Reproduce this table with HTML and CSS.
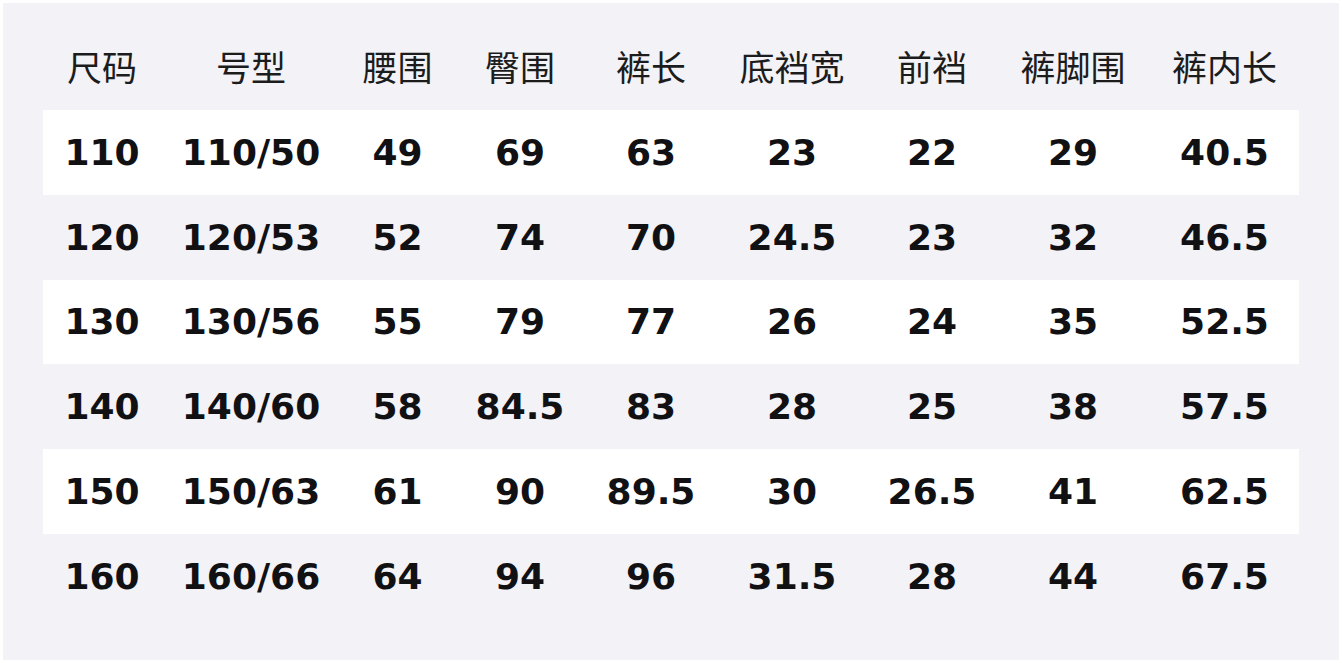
FILE: index.html
```html
<!DOCTYPE html>
<html lang="zh-CN">
<head>
<meta charset="utf-8">
<title>尺码表</title>
<link rel="stylesheet" href="styles.css">
</head>
<body>
<div class="panel">
  <div class="row head">
    <div>尺码</div><div>号型</div><div>腰围</div><div>臀围</div><div>裤长</div><div>底裆宽</div><div>前裆</div><div>裤脚围</div><div>裤内长</div>
  </div>
  <div class="row data alt">
    <div>110</div><div>110/50</div><div>49</div><div>69</div><div>63</div><div>23</div><div>22</div><div>29</div><div>40.5</div>
  </div>
  <div class="row data">
    <div>120</div><div>120/53</div><div>52</div><div>74</div><div>70</div><div>24.5</div><div>23</div><div>32</div><div>46.5</div>
  </div>
  <div class="row data alt">
    <div>130</div><div>130/56</div><div>55</div><div>79</div><div>77</div><div>26</div><div>24</div><div>35</div><div>52.5</div>
  </div>
  <div class="row data">
    <div>140</div><div>140/60</div><div>58</div><div>84.5</div><div>83</div><div>28</div><div>25</div><div>38</div><div>57.5</div>
  </div>
  <div class="row data alt">
    <div>150</div><div>150/63</div><div>61</div><div>90</div><div>89.5</div><div>30</div><div>26.5</div><div>41</div><div>62.5</div>
  </div>
  <div class="row data">
    <div>160</div><div>160/66</div><div>64</div><div>94</div><div>96</div><div>31.5</div><div>28</div><div>44</div><div>67.5</div>
  </div>
</div>
</body>
</html>
```
FILE: styles.css
```css
html, body {
  margin: 0;
  padding: 0;
  background: #ffffff;
}

body {
  padding: 3px;
  width: 1342px;
  height: 663px;
  box-sizing: border-box;
}

.panel {
  background: #f2f2f7;
  height: 657px;
  box-sizing: border-box;
  padding: 24px 40px 41px 40px;
}

.row {
  display: grid;
  grid-template-columns: 118px 180px 113px 132px 130px 152px 128px 154px 149px;
  align-items: center;
  justify-items: center;
  color: #141414;
}

.head {
  height: 83px;
  box-sizing: border-box;
  padding-bottom: 6px;
  font-family: "Noto Sans CJK SC", "Noto Sans", sans-serif;
  font-size: 35px;
  font-weight: 400;
  color: #1c1c1c;
}

.data {
  height: 84.8px;
  font-family: "DejaVu Sans", sans-serif;
  font-weight: 700;
  font-size: 36px;
  color: #111114;
}

.alt {
  background: #ffffff;
}
```
